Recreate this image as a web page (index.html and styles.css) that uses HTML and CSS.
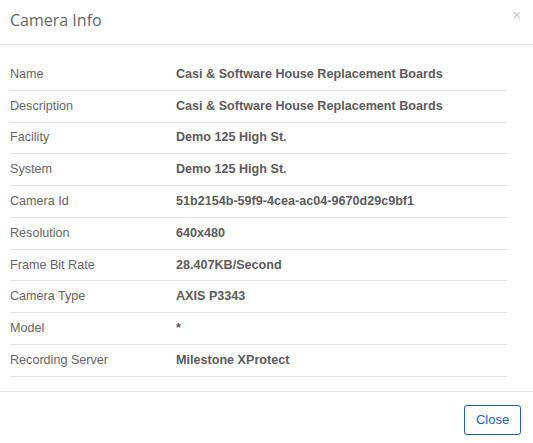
FILE: index.html
```html
<!DOCTYPE html>
<html>
<head>
<meta charset="utf-8">
<link rel="stylesheet" href="styles.css">
</head>
<body>
<div class="modal">
  <div class="modal-header">
    <h4 class="modal-title">Camera Info</h4>
    <span class="close">×</span>
  </div>
  <div class="modal-body">
    <table class="info">
      <tr><td class="label">Name</td><td class="value">Casi &amp; Software House Replacement Boards</td></tr>
      <tr><td class="label">Description</td><td class="value">Casi &amp; Software House Replacement Boards</td></tr>
      <tr><td class="label">Facility</td><td class="value">Demo 125 High St.</td></tr>
      <tr><td class="label">System</td><td class="value">Demo 125 High St.</td></tr>
      <tr><td class="label">Camera Id</td><td class="value">51b2154b-59f9-4cea-ac04-9670d29c9bf1</td></tr>
      <tr><td class="label">Resolution</td><td class="value">640x480</td></tr>
      <tr><td class="label">Frame Bit Rate</td><td class="value">28.407KB/Second</td></tr>
      <tr><td class="label">Camera Type</td><td class="value">AXIS P3343</td></tr>
      <tr><td class="label">Model</td><td class="value">*</td></tr>
      <tr><td class="label">Recording Server</td><td class="value">Milestone XProtect</td></tr>
    </table>
  </div>
  <div class="modal-footer">
    <button class="btn">Close</button>
  </div>
</div>
</body>
</html>
```
FILE: styles.css
```css
html, body {
  margin: 0;
  padding: 0;
  background: #fff;
}
.modal {
  width: 533px;
  height: 443px;
  font-family: "Liberation Sans", Arial, sans-serif;
  font-size: 12.6px;
  color: #666;
  display: flex;
  flex-direction: column;
}
.modal-header {
  height: 45px;
  box-sizing: border-box;
  border-bottom: 1px solid #e5e5e5;
  display: flex;
  align-items: flex-start;
  justify-content: space-between;
  padding: 0 12px 0 10px;
}
.modal-title {
  margin: 0;
  padding-top: 9px;
  font-family: "Open Sans", sans-serif;
  font-weight: 400;
  font-size: 16px;
  line-height: 22px;
  color: #666;
}
.close {
  font-family: "Liberation Sans", Arial, sans-serif;
  font-size: 15px;
  color: #c4c4c4;
  padding-top: 6px;
  line-height: 18px;
}
.modal-body {
  padding: 14px 26px 14px 10px;
  border-bottom: 1px solid #e5e5e5;
}
.info {
  width: 100%;
  border-collapse: collapse;
}
.info td {
  padding: 7.9px 0;
  line-height: 15px;
  border-bottom: 1px solid #e3e3e3;
  vertical-align: middle;
}
.info .label {
  width: 166px;
  color: #666;
}
.info .value {
  font-weight: bold;
  color: #5c5c5c;
}
.modal-footer {
  flex: 1;
  display: flex;
  justify-content: flex-end;
  align-items: flex-start;
  padding: 13px 12px 0 0;
}
.btn {
  font-family: "Liberation Sans", Arial, sans-serif;
  font-size: 13px;
  color: #1d5fbd;
  background: #fff;
  border: 1px solid #1d5fbd;
  border-radius: 3px;
  width: 57px;
  height: 30px;
  padding: 0;
}
```
